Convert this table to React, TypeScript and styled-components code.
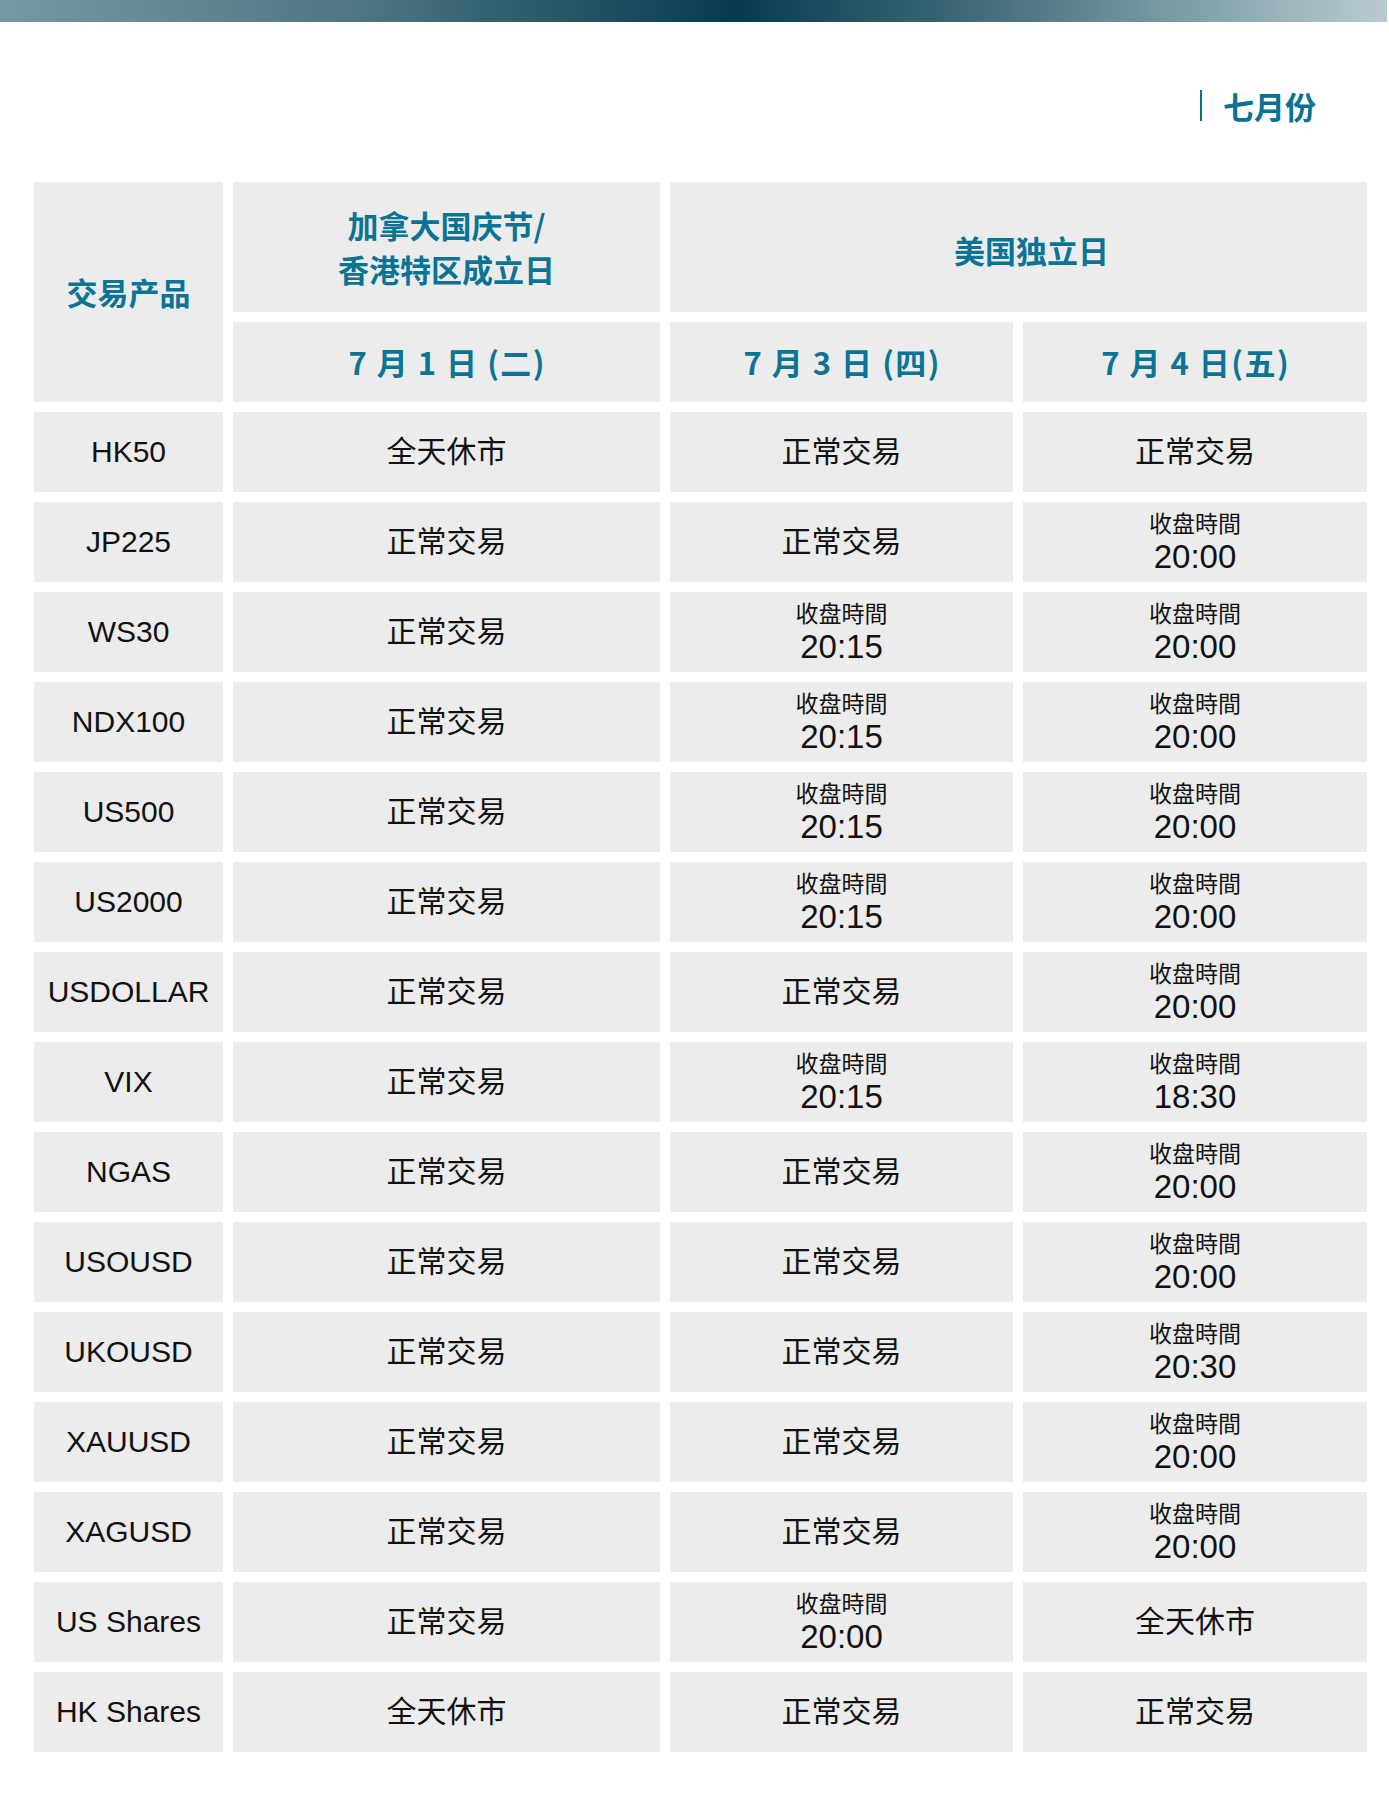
import React from 'react';
import styled, { createGlobalStyle } from 'styled-components';

const GlobalStyle = createGlobalStyle`
  html, body {
    margin: 0;
    padding: 0;
    background: #ffffff;
  }
  body {
    font-family: "Liberation Sans", "Noto Sans CJK SC", sans-serif;
    color: #111111;
  }
`;

const Page = styled.div`
  width: 1389px;
  min-height: 1802px;
  background: #ffffff;
`;

const TopBar = styled.div`
  height: 22px;
  width: 1387px;
  background: linear-gradient(
    90deg,
    #7698a2 0%,
    #4f7884 25%,
    #063b4e 53%,
    #3f6a78 70%,
    #8aa6ae 88%,
    #b9cbd0 100%
  );
`;

const MonthRow = styled.div`
  height: 160px;
  box-sizing: border-box;
  padding: 6px 73px 0 0;
  display: flex;
  align-items: center;
  justify-content: flex-end;
`;

const MonthMark = styled.span`
  display: block;
  width: 2px;
  height: 31px;
  background: #0b6d8c;
  margin-right: 21px;
`;

const MonthLabel = styled.span`
  font-family: "Noto Sans CJK SC", sans-serif;
  font-weight: 700;
  font-size: 31px;
  line-height: 1;
  color: #0a7192;
`;

const Table = styled.div`
  margin-left: 34px;
  width: 1333px;
  display: grid;
  grid-template-columns: 189px 427px 343px 344px;
  grid-template-rows: 130px 80px;
  grid-auto-rows: 80px;
  gap: 10px;
`;

const Cell = styled.div<{ $col?: string; $row?: string; $shift?: number }>`
  background: #ececec;
  box-sizing: border-box;
  display: flex;
  flex-direction: column;
  align-items: center;
  justify-content: center;
  text-align: center;
  padding-left: ${p => p.$shift || 0}px;
  grid-column: ${p => p.$col || 'auto'};
  grid-row: ${p => p.$row || 'auto'};
`;

const HeadText = styled.div<{ $spacing?: number }>`
  font-family: "Noto Sans CJK SC", sans-serif;
  font-weight: 700;
  font-size: 31px;
  line-height: 44px;
  color: #0b7494;
  letter-spacing: ${p => p.$spacing ?? 0}px;
  padding-left: ${p => p.$spacing ?? 0}px;
`;

const ValueText = styled.div`
  font-size: 30px;
  line-height: 1.2;
  color: #111111;
`;

const SmallLabel = styled.div`
  font-family: "Noto Sans CJK SC", sans-serif;
  font-size: 23px;
  line-height: 24px;
  color: #111111;
`;

const TimeText = styled.div`
  font-size: 33px;
  line-height: 34px;
  margin-top: 5.5px;
  color: #111111;
`;

type Value = string;

const rows: [string, Value, Value, Value][] = [
  ['HK50', '全天休市', '正常交易', '正常交易'],
  ['JP225', '正常交易', '正常交易', '20:00'],
  ['WS30', '正常交易', '20:15', '20:00'],
  ['NDX100', '正常交易', '20:15', '20:00'],
  ['US500', '正常交易', '20:15', '20:00'],
  ['US2000', '正常交易', '20:15', '20:00'],
  ['USDOLLAR', '正常交易', '正常交易', '20:00'],
  ['VIX', '正常交易', '20:15', '18:30'],
  ['NGAS', '正常交易', '正常交易', '20:00'],
  ['USOUSD', '正常交易', '正常交易', '20:00'],
  ['UKOUSD', '正常交易', '正常交易', '20:30'],
  ['XAUUSD', '正常交易', '正常交易', '20:00'],
  ['XAGUSD', '正常交易', '正常交易', '20:00'],
  ['US Shares', '正常交易', '20:00', '全天休市'],
  ['HK Shares', '全天休市', '正常交易', '正常交易'],
];

const ValueCell: React.FC<{ value: Value }> = ({ value }) => {
  // a time means the market closes early that day
  if (/^\d{2}:\d{2}$/.test(value)) {
    return (
      <Cell>
        <SmallLabel>收盘時間</SmallLabel>
        <TimeText>{value}</TimeText>
      </Cell>
    );
  }
  return (
    <Cell>
      <ValueText>{value}</ValueText>
    </Cell>
  );
};

const App: React.FC = () => {
  return (
    <Page>
      <GlobalStyle />
      <TopBar />
      <MonthRow>
        <MonthMark />
        <MonthLabel>七月份</MonthLabel>
      </MonthRow>
      <Table>
        <Cell $col="1" $row="1 / span 2">
          <HeadText>交易产品</HeadText>
        </Cell>
        <Cell $col="2" $row="1">
          <HeadText>加拿大国庆节/</HeadText>
          <HeadText>香港特区成立日</HeadText>
        </Cell>
        <Cell $col="3 / span 2" $row="1" $shift={26}>
          <HeadText style={{ paddingTop: 6 }}>美国独立日</HeadText>
        </Cell>
        <Cell $col="2" $row="2">
          <HeadText $spacing={1.5}>7 月 1 日 (二)</HeadText>
        </Cell>
        <Cell $col="3" $row="2">
          <HeadText $spacing={1.5}>7 月 3 日 (四)</HeadText>
        </Cell>
        <Cell $col="4" $row="2">
          <HeadText $spacing={1.5}>7 月 4 日(五)</HeadText>
        </Cell>
        {rows.map(([name, a, b, c]) => (
          <React.Fragment key={name}>
            <Cell>
              <ValueText>{name}</ValueText>
            </Cell>
            <ValueCell value={a} />
            <ValueCell value={b} />
            <ValueCell value={c} />
          </React.Fragment>
        ))}
      </Table>
    </Page>
  );
};

export default App;
